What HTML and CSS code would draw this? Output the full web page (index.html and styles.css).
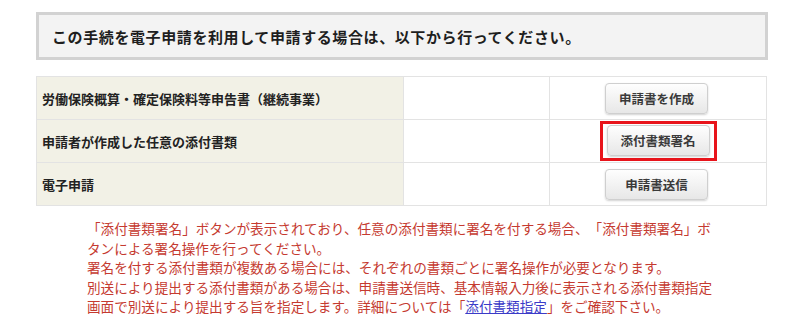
FILE: index.html
```html
<!DOCTYPE html>
<html lang="ja">
<head>
<meta charset="utf-8">
<link rel="stylesheet" href="styles.css">
</head>
<body>
<div class="page">
  <div class="notice">この手続を電子申請を利用して申請する場合は、以下から行ってください。</div>
  <table class="steps">
    <tr>
      <td class="label">労働保険概算・確定保険料等申告書（継続事業）</td>
      <td class="blank"></td>
      <td class="action"><button class="btn">申請書を作成</button></td>
    </tr>
    <tr>
      <td class="label">申請者が作成した任意の添付書類</td>
      <td class="blank"></td>
      <td class="action"><span class="frame"><button class="btn">添付書類署名</button></span></td>
    </tr>
    <tr>
      <td class="label">電子申請</td>
      <td class="blank"></td>
      <td class="action"><button class="btn">申請書送信</button></td>
    </tr>
  </table>
  <div class="note">
    <p>「添付書類署名」ボタンが表示されており、任意の添付書類に署名を付する場合、「添付書類署名」ボタンによる署名操作を行ってください。</p>
    <p>署名を付する添付書類が複数ある場合には、それぞれの書類ごとに署名操作が必要となります。</p>
    <p>別送により提出する添付書類がある場合は、申請書送信時、基本情報入力後に表示される添付書類指定画面で別送により提出する旨を指定します。詳細については「<a href="#" class="link">添付書類指定</a>」をご確認下さい。</p>
  </div>
</div>
</body>
</html>
```

FILE: styles.css
```css
html, body {
  margin: 0;
  padding: 0;
  background: #ffffff;
}

body {
  font-family: "Noto Sans CJK JP", "Noto Sans", sans-serif;
  color: #222222;
}

.page {
  padding: 12px 0 0 36px;
}

.notice {
  box-sizing: border-box;
  width: 732px;
  height: 48px;
  border: 3px solid #d2d2d2;
  background: #f3f3f3;
  padding-left: 13px;
  display: flex;
  align-items: center;
  font-size: 15px;
  font-weight: 700;
  letter-spacing: 0.6px;
  color: #1e1e1e;
}

.steps {
  margin-top: 16px;
  border-collapse: collapse;
  width: 731px;
  table-layout: fixed;
}

.steps td {
  border: 1px solid #e3e3e3;
  height: 42px;
  padding: 0;
}

.label {
  width: 361px;
  background: #f2f1e6;
  padding-left: 5px !important;
  font-size: 13px;
  font-weight: 700;
  color: #222222;
}

.blank {
  width: 145px;
}

.action {
  text-align: center;
}

.btn {
  box-sizing: border-box;
  width: 103px;
  height: 31px;
  border: 1px solid #cfcfcf;
  border-radius: 4px;
  background: linear-gradient(#fefefe, #e7e7e7);
  box-shadow: 0 1px 2px rgba(0, 0, 0, 0.18);
  font-family: "Noto Sans CJK JP", sans-serif;
  font-size: 12.5px;
  font-weight: 700;
  color: #3a3a3a;
  padding: 0;
  margin-right: 3px;
  vertical-align: middle;
}

.frame {
  display: inline-block;
  border: 3px solid #e8141b;
  padding: 1px 4px 2px;
  line-height: 0;
  vertical-align: middle;
}

.frame .btn {
  margin-right: 0;
}

.note {
  margin-top: 13px;
  margin-left: 51px;
  width: 630px;
  font-size: 13.6px;
  line-height: 19.5px;
  color: #c53a30;
  text-spacing-trim: space-all;
}

.note p {
  margin: 0;
}

.link {
  color: #3b3bc8;
  text-decoration: underline;
}
```
